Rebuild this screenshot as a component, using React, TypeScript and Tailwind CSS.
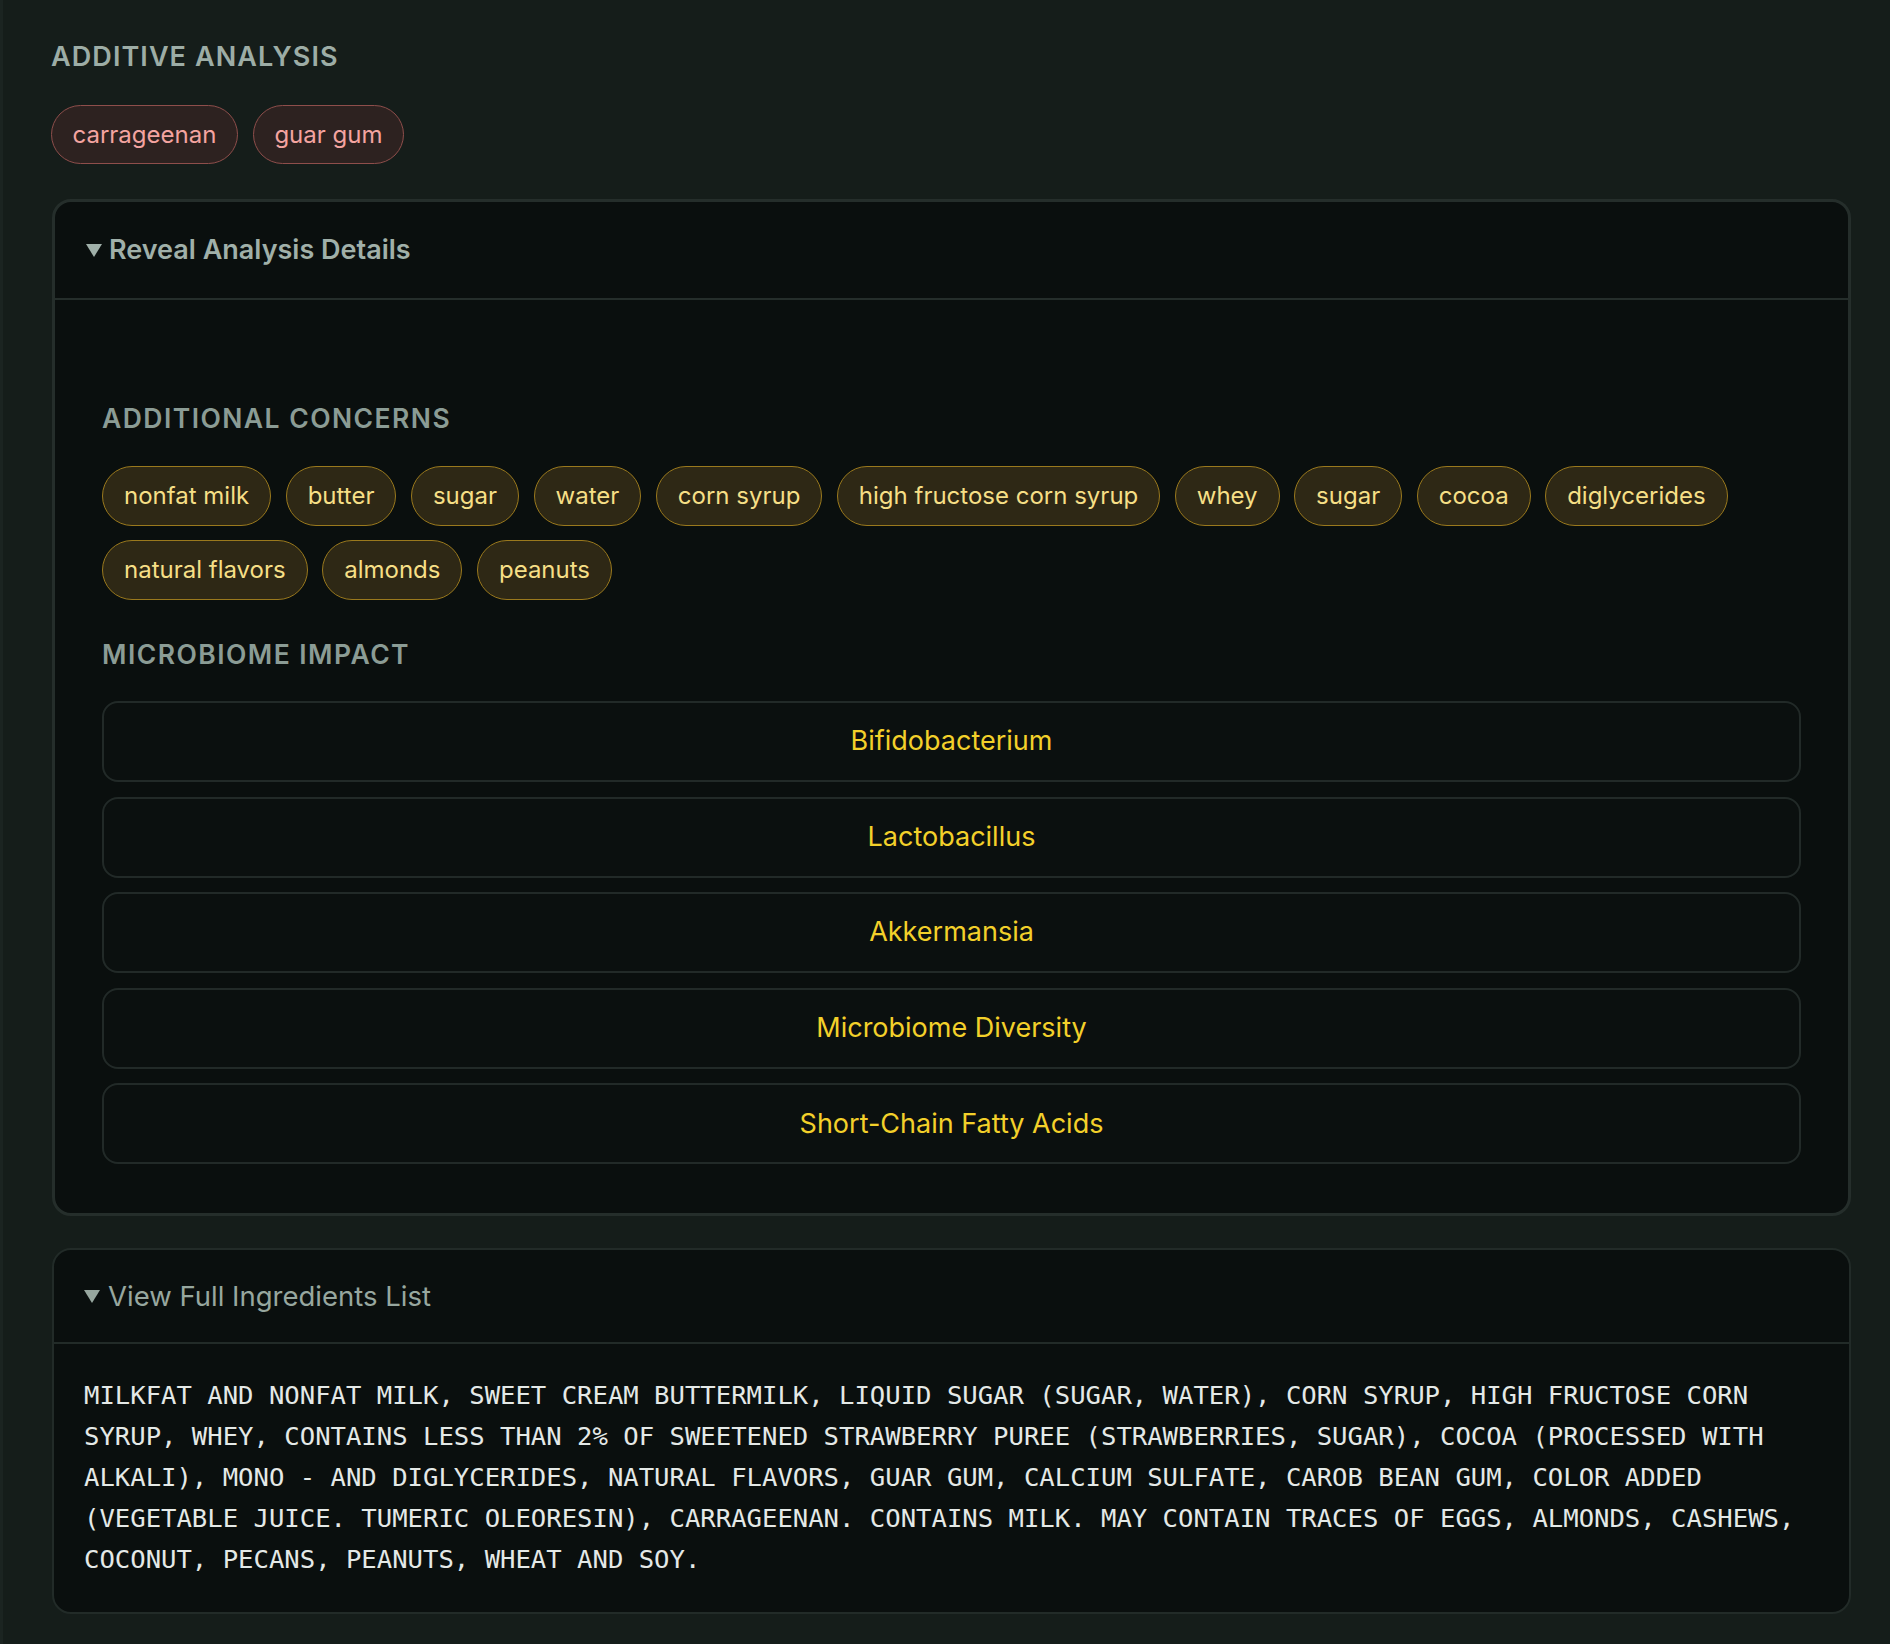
import React from "react";

const additives = ["carrageenan", "guar gum"];
const concerns = [
  "nonfat milk",
  "butter",
  "sugar",
  "water",
  "corn syrup",
  "high fructose corn syrup",
  "whey",
  "sugar",
  "cocoa",
  "diglycerides",
  "natural flavors",
  "almonds",
  "peanuts",
];
const microbes = [
  "Bifidobacterium",
  "Lactobacillus",
  "Akkermansia",
  "Microbiome Diversity",
  "Short-Chain Fatty Acids",
];

const ingredients =
  "MILKFAT AND NONFAT MILK, SWEET CREAM BUTTERMILK, LIQUID SUGAR (SUGAR, WATER), CORN SYRUP, HIGH FRUCTOSE CORN SYRUP, WHEY, CONTAINS LESS THAN 2% OF SWEETENED STRAWBERRY PUREE (STRAWBERRIES, SUGAR), COCOA (PROCESSED WITH ALKALI), MONO - AND DIGLYCERIDES, NATURAL FLAVORS, GUAR GUM, CALCIUM SULFATE, CAROB BEAN GUM, COLOR ADDED (VEGETABLE JUICE. TUMERIC OLEORESIN), CARRAGEENAN. CONTAINS MILK. MAY CONTAIN TRACES OF EGGS, ALMONDS, CASHEWS, COCONUT, PECANS, PEANUTS, WHEAT AND SOY.";

function Triangle() {
  return (
    <svg width="16" height="13" viewBox="0 0 16 13" className="shrink-0">
      <polygon points="0,0 16,0 8,13" fill="currentColor" />
    </svg>
  );
}

export default function App() {
  return (
    <div
      className="min-h-screen bg-[#151d1a] border-l-[3px] border-[#1b2421] pl-[48px] pr-[39px] pt-[41px] pb-[31px]"
      style={{ fontFamily: "Inter, 'Noto Sans', sans-serif" }}
    >
      <h2 className="text-[27px] leading-[32px] font-semibold tracking-[0.04em] text-[#9dada6]">
        ADDITIVE ANALYSIS
      </h2>
      <div className="mt-[32px] flex flex-wrap gap-[15px]">
        {additives.map((a) => (
          <span
            key={a}
            className="h-[59px] flex items-center px-[20.5px] rounded-full border-[1.5px] border-[#8e4e4b] bg-[#2d2220] text-[24px] text-[#f4a4a0]"
          >
            {a}
          </span>
        ))}
      </div>

      <div className="mt-[35px] ml-[1px] rounded-[19px] border-[3px] border-[#252e2b] bg-[#0a0f0e]">
        <div className="h-[98px] flex items-center gap-[7px] pl-[31px] border-b-2 border-[#252e2b] text-[#a0b0a9]">
          <Triangle />
          <span className="text-[27px] font-semibold leading-[32px]">Reveal Analysis Details</span>
        </div>
        <div className="px-[47px] pt-[102px] pb-[49px]">
          <h3 className="text-[26.5px] leading-[32px] font-semibold tracking-[0.055em] text-[#8b9c95]">
            ADDITIONAL CONCERNS
          </h3>
          <div className="mt-[32px] flex flex-wrap gap-x-[14.5px] gap-y-[14px]">
            {concerns.map((c, i) => (
              <span
                key={i}
                className="h-[60px] flex items-center px-[21px] rounded-full border-[1.5px] border-[#9a791d] bg-[#2e2815] text-[24px] text-[#f6df86]"
              >
                {c}
              </span>
            ))}
          </div>
          <h3 className="mt-[38px] text-[26.5px] leading-[32px] font-semibold tracking-[0.055em] text-[#8b9c95]">
            MICROBIOME IMPACT
          </h3>
          <div className="mt-[31px] flex flex-col gap-[14.6px]">
            {microbes.map((m) => (
              <div
                key={m}
                className="h-[81px] flex items-center justify-center rounded-[16px] border-2 border-[#222a28] bg-[#0b100f] text-[27px] font-normal text-[#f3d02a]"
              >
                {m}
              </div>
            ))}
          </div>
        </div>
      </div>

      <div className="mt-[32px] ml-[1px] rounded-[19px] border-2 border-[#222b28] bg-[#0a0f0e]">
        <div className="h-[94px] flex items-center gap-[8px] pl-[30px] border-b-2 border-[#222b28] text-[#97a79f]">
          <Triangle />
          <span className="text-[27.5px] leading-[32px]">View Full Ingredients List</span>
        </div>
        <div className="px-[30px] pt-[31px] pb-[32px]">
          <p
            className="text-[25.6px] leading-[41px] text-[#e4e9e7]"
            style={{ fontFamily: "'DejaVu Sans Mono', 'Liberation Mono', monospace" }}
          >
            {ingredients}
          </p>
        </div>
      </div>
    </div>
  );
}
